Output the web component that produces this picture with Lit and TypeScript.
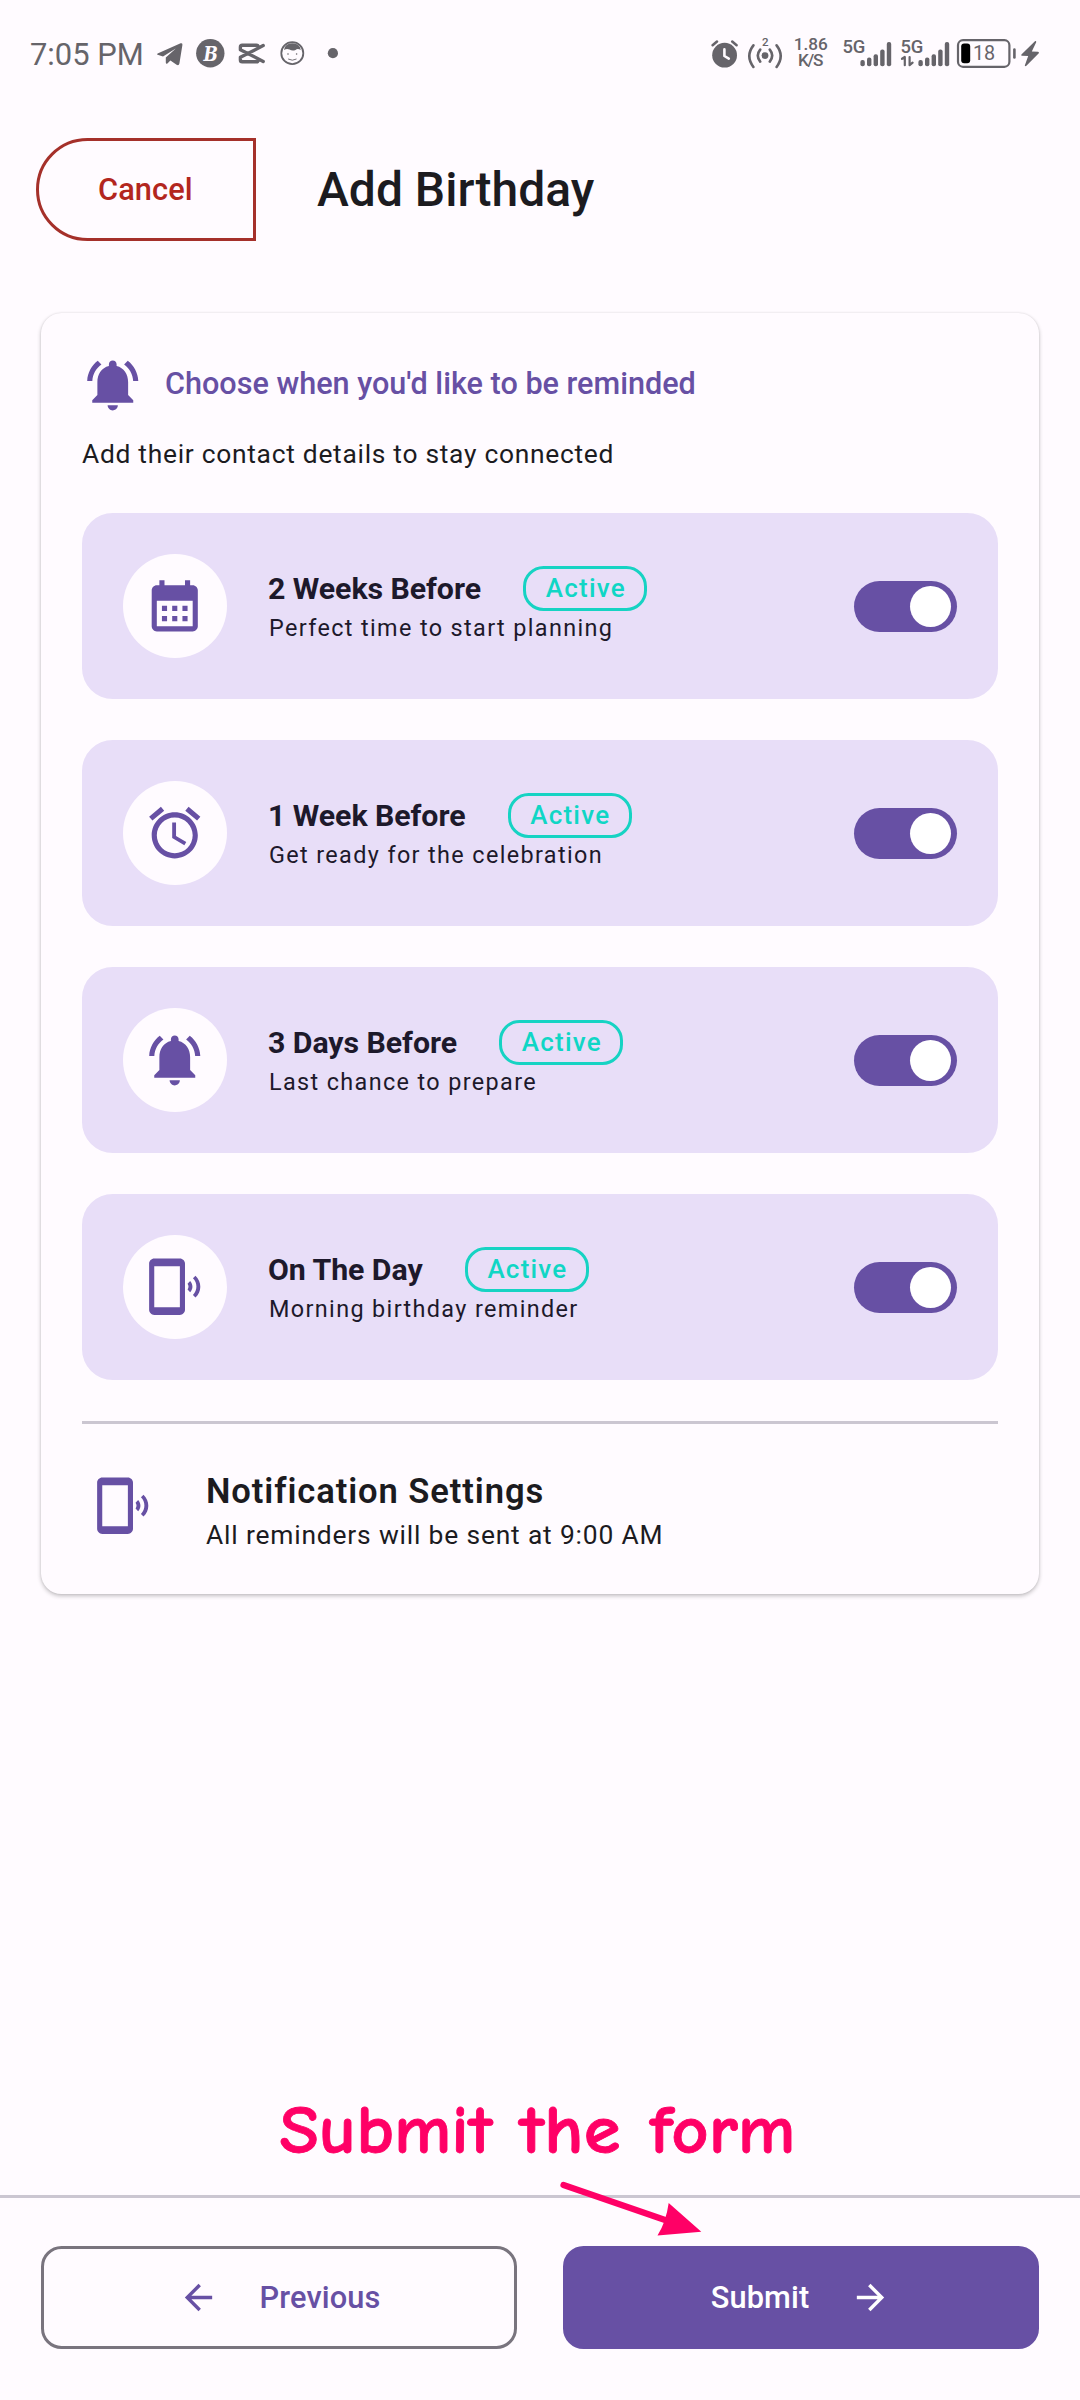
import { LitElement, html, css, svg } from "lit";
import { customElement, property, state } from "lit/decorators.js";
import { classMap } from "lit/directives/class-map.js";

const ICONS: Record<string, string> = {
  bell: "M7.58 4.08L6.15 2.65C3.75 4.48 2.17 7.3 2.03 10.5h2c.15-2.65 1.51-4.97 3.55-6.42zm12.39 6.42h2c-.15-3.2-1.73-6.02-4.12-7.85l-1.42 1.43c2.02 1.45 3.39 3.77 3.54 6.42zM18 11c0-3.07-1.64-5.64-4.5-6.32V4c0-.83-.67-1.5-1.5-1.5s-1.5.67-1.5 1.5v.68C7.63 5.36 6 7.92 6 11v5l-2 2v1h16v-1l-2-2v-5zm-6 11c.14 0 .27-.01.4-.04.65-.14 1.18-.58 1.44-1.18.1-.24.15-.5.15-.78h-4c.01 1.1.9 2 2.01 2z",
  calendar:
    "M19 4h-1V2h-2v2H8V2H6v2H5c-1.11 0-1.99.9-1.99 2L3 20c0 1.1.89 2 2 2h14c1.1 0 2-.9 2-2V6c0-1.1-.9-2-2-2zm0 16H5V10h14v10zM9 14H7v-2h2v2zm4 0h-2v-2h2v2zm4 0h-2v-2h2v2zm-8 4H7v-2h2v2zm4 0h-2v-2h2v2zm4 0h-2v-2h2v2z",
  alarm:
    "M22 5.72l-4.6-3.86-1.29 1.53 4.6 3.86L22 5.72zM7.88 3.39L6.6 1.86 2 5.71l1.29 1.53 4.59-3.85zM12.5 8H11v6l4.75 2.85.75-1.23-4-2.37V8zM12 4c-4.97 0-9 4.03-9 9s4.02 9 9 9c4.97 0 9-4.03 9-9s-4.03-9-9-9zm0 16c-3.87 0-7-3.13-7-7s3.13-7 7-7 7 3.13 7 7-3.13 7-7 7z",
  phone:
    "M20.1 7.7l-1 1c1.8 1.8 1.8 4.6 0 6.5l1 1c2.5-2.3 2.5-6.1 0-8.5zM18 9.8l-1 1c.5.7.5 1.6 0 2.3l1 1c1.2-1.2 1.2-3 0-4.3zM14 1H4c-1.1 0-2 .9-2 2v18c0 1.1.9 2 2 2h10c1.1 0 2-.9 2-2V3c0-1.1-.9-2-2-2zm0 19H4V4h10v16z",
  back: "M20 11H7.83l5.59-5.59L12 4l-8 8 8 8 1.41-1.41L7.83 13H20v-2z",
  forward: "M12 4l-1.41 1.41L16.17 11H4v2h12.17l-5.58 5.59L12 20l8-8z",
};

@customElement("app-icon")
export class AppIcon extends LitElement {
  @property() name = "bell";
  static styles = css`
    :host { display: block; flex: none; width: 61.5px; height: 61.5px; }
    svg { display: block; width: 100%; height: 100%; fill: currentColor; }
  `;
  render() {
    return html`<svg viewBox="0 0 24 24"><path d=${ICONS[this.name]}></path></svg>`;
  }
}

@customElement("status-bar")
export class StatusBar extends LitElement {
  static styles = css`
    :host { display: flex; align-items: flex-start; height: 90px; padding-top: 20px; color: #66646a; }
    .time { width: 120px; padding: 16px 0 0 30px; font-size: 30.9px; line-height: 38px; white-space: nowrap; flex: none; }
    svg { display: block; flex: none; fill: #66646a; font-family: Roboto, sans-serif; }
    .right { margin-left: auto; margin-right: 30px; }
    .line { fill: none; stroke: #66646a; stroke-linecap: round; stroke-linejoin: round; }
    .knock { fill: #fffbff; }
    .knock-line { fill: none; stroke: #fffbff; stroke-width: 2.6; stroke-linecap: round; stroke-linejoin: round; }
    .letter { font: italic 700 20px "DejaVu Serif", serif; }
    .small { font-size: 17.2px; font-weight: 500; }
    .tiny { font-size: 11.5px; font-weight: 500; }
    .net { font-size: 18.4px; font-weight: 500; }
    .level { font-size: 19.8px; }
    .charge { fill: #000; }
  `;

  private bars(x: number) {
    const tops = [60, 57.6, 54.3, 49.4, 42];
    return tops.map((t, i) => svg`<rect x=${x + i * 6.6} y=${t} width="4.4" height=${66.2 - t} rx="2"></rect>`);
  }

  render() {
    return html`
      <div class="time">7:05 PM</div>
      <svg width="200" height="70" viewBox="150 20 200 70">
        <path d="M157.6 53.4L180.6 43.3Q182.8 42.6 182.4 45L179.4 63.6Q178.8 66 176.6 64.8L170.4 60.4L167.4 63.4Q166 64.4 165.8 62.4V57.6L175.8 48.4L163 56.4L157.6 54.8Q156.4 54 157.6 53.4Z"></path>
        <circle cx="210.3" cy="53.2" r="14.2"></circle>
        <text class="knock letter" x="203.4" y="60.8" textLength="14.4" lengthAdjust="spacingAndGlyphs">B</text>
        <path class="line" stroke-width="3.4" d="M263.2 45.6L240.4 57.3V60Q240.4 61.8 242.2 61.8H256.4Q258 61.8 258 60.4M263.2 61.4L240.4 49.7V47Q240.4 45.2 242.2 45.2H256.4Q258 45.2 258 46.6"></path>
        <circle class="line" stroke-width="1.8" cx="292.3" cy="53.2" r="11"></circle>
        <path d="M284 50Q284.6 43.6 292.3 43.2Q300.2 43.6 300.8 50Q297.5 47.8 295.5 50Q292.3 51.2 289.5 49.6Q287 48 284 50Z"></path>
        <circle cx="288" cy="54" r=".8"></circle>
        <circle cx="296.6" cy="54" r=".8"></circle>
        <path class="line" stroke-width=".9" d="M288.5 59.2Q292.3 61.4 296.2 59.2"></path>
        <circle cx="332.9" cy="53.2" r="5.1"></circle>
      </svg>
      <svg class="right" width="350" height="70" viewBox="700 20 350 70">
        <circle cx="724.6" cy="55.2" r="12.4"></circle>
        <path class="line" stroke-width="2.6" d="M712.6 45.2L717 41.6M736.6 45.2L732.2 41.6"></path>
        <path class="knock-line" d="M724.4 49.4V56L728.8 58.6"></path>
        <circle cx="765" cy="55.6" r="3.4"></circle>
        <path class="line" stroke-width="2.6" d="M760.2 49.6Q755.4 55.6 760.2 61.6M769.8 49.6Q774.6 55.6 769.8 61.6M753.4 45.4Q745.2 56 753.4 67M776.6 45.4Q784.8 56 776.6 67"></path>
        <text class="tiny" x="765.3" y="46" text-anchor="middle">2</text>
        <text class="small" x="810.7" y="50" text-anchor="middle">1.86</text>
        <text class="small" x="810.7" y="66" text-anchor="middle" textLength="25.5">K/S</text>
        <text class="net" x="842.4" y="52.6">5G</text>
        ${this.bars(860.4)}
        <text class="net" x="900.4" y="52.6">5G</text>
        <path class="line" stroke-width="2.2" d="M902 58.8L904.8 57V65.2M909.6 57V65.2L912.6 62.6"></path>
        ${this.bars(918.4)}
        <rect class="line" stroke-width="2.2" x="958" y="40.2" width="51.4" height="26.6" rx="5"></rect>
        <rect class="charge" x="961.2" y="43.6" width="9" height="19.6" rx="3"></rect>
        <text class="level" x="973" y="60.4">18</text>
        <path class="line" stroke-width="2.6" d="M1014.4 49.6V57.4"></path>
        <path d="M1035.2 41L1021.4 54.4Q1020.8 55.6 1022 55.8L1028.2 56L1024.8 65.4Q1025 66.8 1026.4 65.8L1038.8 53.2Q1039.4 52 1038 51.8L1031.8 51.6L1036.2 42.2Q1036.4 40.8 1035.2 41Z"></path>
      </svg>
    `;
  }
}

@customElement("reminder-row")
export class ReminderRow extends LitElement {
  @property() icon = "bell";
  @property() heading = "";
  @property() detail = "";
  @state() private on = true;

  static styles = css`
    :host { display: flex; align-items: center; height: 186px; box-sizing: border-box; padding: 0 41px; gap: 41px; border-radius: 30.75px; background: #e8def8; color: #1d192b; }
    .disc { flex: none; width: 104px; height: 104px; border-radius: 50%; background: #fffbff; color: #6750a4; display: flex; align-items: center; justify-content: center; }
    .text { flex: 1; min-width: 0; white-space: nowrap; }
    .top { display: flex; align-items: center; gap: 42.5px; height: 45px; }
    .title { font-size: 30.3px; font-weight: 700; letter-spacing: -0.06px; line-height: 45px; }
    .badge { box-sizing: border-box; width: 124px; height: 45px; padding-left: 19.3px; border: 3px solid #16d3c3; border-radius: 20.5px; color: #10d6c5; font-size: 26px; font-weight: 500; letter-spacing: 1.22px; line-height: 38px; }
    .detail { padding-left: 1px; font-size: 23.4px; letter-spacing: 1.37px; line-height: 35px; }
    .switch { flex: none; box-sizing: border-box; width: 103px; height: 51px; padding: 5px 6px; border: 0; border-radius: 26px; background: #aaa5b2; display: flex; justify-content: flex-start; }
    .switch.on { background: #6750a4; justify-content: flex-end; }
    .knob { width: 41px; height: 41px; border-radius: 50%; background: #fff; }
  `;

  render() {
    return html`
      <div class="disc"><app-icon name=${this.icon}></app-icon></div>
      <div class="text">
        <div class="top">
          <span class="title">${this.heading}</span>
          ${this.on ? html`<span class="badge">Active</span>` : ""}
        </div>
        <div class="detail">${this.detail}</div>
      </div>
      <button class=${classMap({ switch: true, on: this.on })} role="switch" aria-checked=${this.on} @click=${() => (this.on = !this.on)}>
        <span class="knob"></span>
      </button>
    `;
  }
}

const REMINDERS = [
  { icon: "calendar", heading: "2 Weeks Before", detail: "Perfect time to start planning" },
  { icon: "alarm", heading: "1 Week Before", detail: "Get ready for the celebration" },
  { icon: "bell", heading: "3 Days Before", detail: "Last chance to prepare" },
  { icon: "phone", heading: "On The Day", detail: "Morning birthday reminder" },
];

@customElement("app-root")
export class AppRoot extends LitElement {
  static styles = css`
    :host { display: flex; flex-direction: column; position: relative; width: 1080px; height: 2400px; overflow: hidden; background: #fffbff; color: #1c1b1f; font-family: Roboto, "Noto Sans", sans-serif; }
    button { font-family: inherit; margin: 0; white-space: nowrap; }
    .header { display: flex; align-items: center; padding: 28px 36px 0; height: 103px; }
    .cancel { box-sizing: border-box; width: 220px; height: 103px; padding: 0 0 0 59px; text-align: left; background: none; border: 3px solid #a5302a; border-radius: 51.5px 0 0 51.5px; color: #b3261e; font-size: 30.75px; font-weight: 500; letter-spacing: 0.1px; }
    .page-title { margin: 0 0 0 61px; font-size: 48px; font-weight: 500; line-height: 60px; white-space: nowrap; }
    .card { margin: 72px 41px 0; padding: 41px; border-radius: 20.5px; background: #fffbff; box-shadow: 0 2px 4px rgba(0, 0, 0, 0.24), 0 0 2px rgba(0, 0, 0, 0.1); }
    .lead { display: flex; align-items: center; gap: 21.5px; height: 62px; color: #6750a4; font-size: 30.6px; font-weight: 500; line-height: 36px; white-space: nowrap; }
    .lead span { padding-bottom: 2px; }
    .hint { margin: 20px 0 41px; font-size: 26.4px; letter-spacing: 0.71px; line-height: 36px; white-space: nowrap; }
    .rows { display: flex; flex-direction: column; gap: 41px; }
    .rule { height: 3px; background: #cbc6d1; }
    .card .rule { margin: 41px 0; }
    .settings { display: flex; gap: 42px; height: 88px; white-space: nowrap; }
    .slot { display: flex; align-items: center; justify-content: center; width: 82px; height: 82px; color: #6750a4; }
    .settings-title { padding-top: 1px; font-size: 34.6px; font-weight: 600; letter-spacing: 0.9px; line-height: 51px; }
    .settings-text { font-size: 26.4px; letter-spacing: 0.82px; line-height: 37px; }
    .spacer { flex: 1; }
    .footer { height: 205px; flex: none; }
    .actions { display: flex; gap: 46px; padding: 48px 41px 0; }
    .action { flex: 1; height: 103px; box-sizing: border-box; display: flex; align-items: center; justify-content: center; gap: 41px; padding: 0; border-radius: 20.5px; border: 3px solid #79747e; background: none; color: #6750a4; font-size: 30.75px; font-weight: 500; letter-spacing: 0.1px; }
    .action app-icon { width: 41px; height: 41px; }
    .primary { border-color: #6750a4; background: #6750a4; color: #fff; }
    .note { position: absolute; left: 261px; top: 2080px; fill: #ff0066; stroke: #ff0066; stroke-linejoin: round; stroke-linecap: round; pointer-events: none; }
    .note-text { font: 700 69px "Comic Neue", Lato, sans-serif; stroke-width: 0.8px; }
  `;

  render() {
    return html`
      <status-bar></status-bar>
      <header class="header">
        <button class="cancel">Cancel</button>
        <h1 class="page-title">Add Birthday</h1>
      </header>
      <section class="card">
        <div class="lead"><app-icon name="bell"></app-icon><span>Choose when you'd like to be reminded</span></div>
        <div class="hint">Add their contact details to stay connected</div>
        <div class="rows">
          ${REMINDERS.map((r) => html`<reminder-row icon=${r.icon} heading=${r.heading} detail=${r.detail}></reminder-row>`)}
        </div>
        <div class="rule"></div>
        <div class="settings">
          <div class="slot"><app-icon name="phone"></app-icon></div>
          <div>
            <div class="settings-title">Notification Settings</div>
            <div class="settings-text">All reminders will be sent at 9:00 AM</div>
          </div>
        </div>
      </section>
      <div class="spacer"></div>
      <footer class="footer">
        <div class="rule"></div>
        <div class="actions">
          <button class="action"><app-icon name="back"></app-icon><span>Previous</span></button>
          <button class="action primary"><span>Submit</span><app-icon name="forward"></app-icon></button>
        </div>
      </footer>
      <svg class="note" width="560" height="170" viewBox="260 2080 560 170">
        <g class="note-text">
          <text x="278.5" y="2152.5" textLength="213" lengthAdjust="spacingAndGlyphs">Submit</text>
          <text x="518.5" y="2152.5" textLength="101" lengthAdjust="spacingAndGlyphs">the</text>
          <text x="648.5" y="2152.5" textLength="146" lengthAdjust="spacingAndGlyphs">form</text>
        </g>
        <path d="M562.5 2185L667 2221" stroke-width="6.2" fill="none"></path>
        <path d="M667.7 2203L700.3 2231.8L656.5 2235.6Q665 2222 667.7 2203Z" stroke="none"></path>
      </svg>
    `;
  }
}
